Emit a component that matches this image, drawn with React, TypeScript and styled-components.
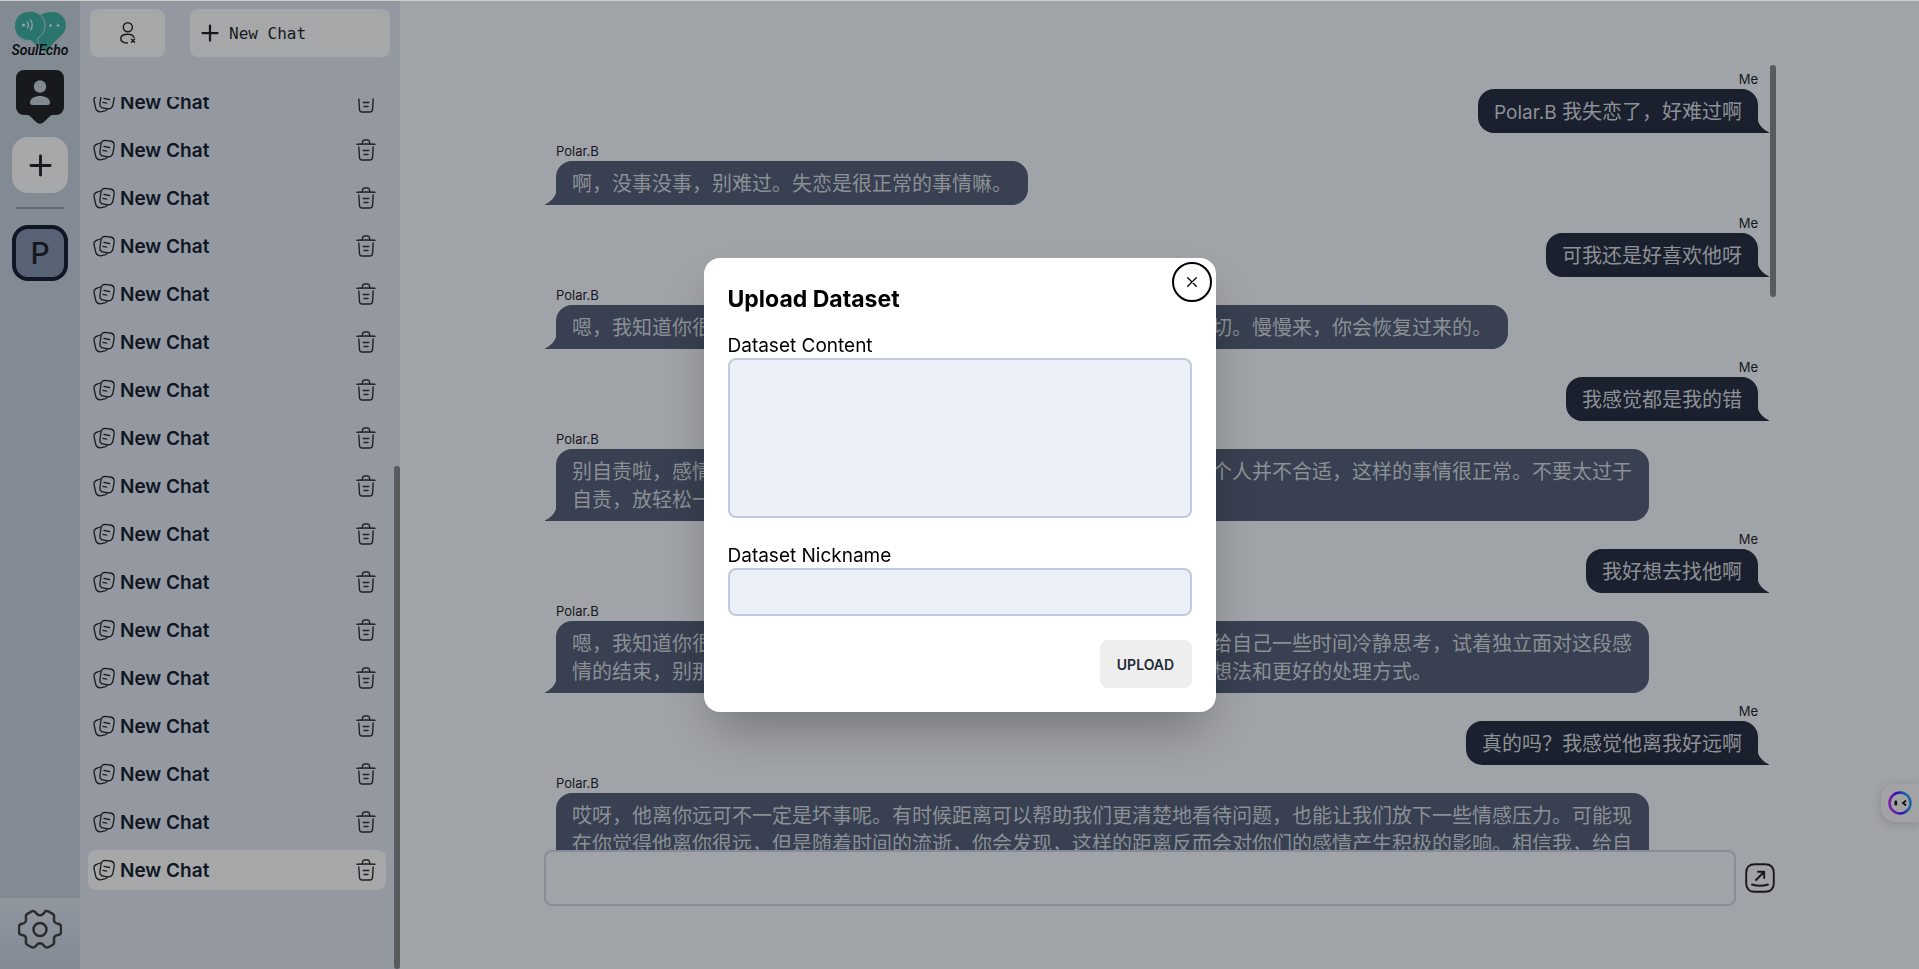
import React from "react";
import styled, { createGlobalStyle } from "styled-components";

const sans = `Inter, "Noto Sans CJK SC", sans-serif`;

const GlobalStyle = createGlobalStyle`
  *, *::before, *::after { box-sizing: border-box; }
  html, body, #root { height: 100%; }
  body { margin: 0; overflow: hidden; font-family: ${sans}; background: #a0a3a7; }
  button, input, textarea { font: inherit; color: inherit; }
  button { border: 0; padding: 0; cursor: pointer; display: flex; align-items: center; justify-content: center; }
`;

const Page = styled.div`
  display: flex;
  height: 100%;
  border-top: 1px solid #cdced0;
`;

/* ---- left rail ---- */
const Rail = styled.nav`
  width: 80px;
  flex: none;
  display: flex;
  flex-direction: column;
  align-items: center;
  background: #828a94;
`;
const LogoLink = styled.a`
  display: block;
  height: 48px;
  margin-top: 8px;
`;
const BadgeButton = styled.button`
  width: 48px;
  height: 54px;
  margin-top: 13px;
  background: none;
`;
const AddButton = styled.button`
  width: 56px;
  height: 56px;
  margin-top: 13px;
  border-radius: 16px;
  background: #a7a8a9;
  color: #17191d;
`;
const Divider = styled.hr`
  width: 48px;
  height: 2px;
  margin: 14px 0 16px;
  border: 0;
  border-radius: 2px;
  background: #646a75;
`;
const AvatarButton = styled.button`
  width: 56px;
  height: 56px;
  border: 4px solid #101623;
  border-radius: 16px;
  background: #586476;
  color: #14181f;
  font-size: 30px;
  font-weight: 500;
`;
const SettingsBar = styled.div`
  display: flex;
  justify-content: center;
  width: 100%;
  height: 71px;
  margin-top: auto;
  padding-top: 10px;
  background: linear-gradient(#9297a0, #828a94);
`;
const SettingsButton = styled.button`
  width: 44px;
  height: 44px;
  background: none;
`;

/* ---- chat list ---- */
const Sidebar = styled.aside`
  width: 320px;
  flex: none;
  display: flex;
  flex-direction: column;
  background: #9398a1;
`;
const Toolbar = styled.div`
  display: flex;
  justify-content: space-between;
  padding: 8px 10px 40px;
`;
const ToolButton = styled.button<{ $wide?: boolean }>`
  width: ${(p) => (p.$wide ? 200 : 75)}px;
  height: 48px;
  gap: 10px;
  border-radius: 8px;
  background: #a6a7a8;
  color: #14181f;
  font-family: "DejaVu Sans Mono", monospace;
  font-size: 16px;
  ${(p) => p.$wide && "justify-content: flex-start; padding-left: 11px;"}
`;
const ListArea = styled.div`
  flex: 1;
  min-height: 0;
  display: flex;
  overflow: hidden;
`;
const ChatList = styled.ul`
  flex: 1;
  display: flex;
  flex-direction: column;
  justify-content: flex-end;
  gap: 8px;
  margin: 0;
  padding: 0 8px 79px;
  list-style: none;
`;
const ChatRow = styled.li<{ $active?: boolean }>`
  flex: none;
  display: flex;
  align-items: center;
  justify-content: space-between;
  height: 40px;
  padding: 0 10px 0 4px;
  border-radius: 8px;
  background: ${(p) => (p.$active ? "#a6a7a8" : "transparent")};
`;
const ChatLink = styled.a`
  display: flex;
  align-items: center;
  gap: 4px;
  color: #101623;
  font-size: 19px;
  font-weight: 600;
  line-height: 28px;
  text-decoration: none;
`;
const ChatTitle = styled.span`
  padding-top: 2px;
`;
const IconButton = styled.button`
  background: none;
`;
const ListTrack = styled.div`
  width: 6px;
  display: flex;
  flex-direction: column;
  justify-content: flex-end;
`;
const Thumb = styled.div<{ $size: string }>`
  width: 6px;
  height: ${(p) => p.$size};
  border-radius: 3px;
  background: #585b5e;
`;

/* ---- conversation ---- */
const Main = styled.main`
  flex: 1;
  min-width: 0;
  display: flex;
  flex-direction: column;
  padding: 64px 143px 63px 144px;
  background: #a0a3a7;
`;
const Conversation = styled.section`
  flex: 1;
  min-height: 0;
  display: flex;
  overflow: hidden;
`;
const Messages = styled.div`
  flex: 1;
  padding-left: 12px;
`;
const Message = styled.article<{ $mine: boolean }>`
  display: flex;
  flex-direction: column;
  align-items: ${(p) => (p.$mine ? "flex-end" : "flex-start")};
  padding: 4px 0;
`;
const Author = styled.header<{ $mine: boolean }>`
  margin-right: ${(p) => (p.$mine ? 12 : 0)}px;
  color: #14171c;
  font-size: 13px;
  line-height: 20px;
`;
const Bubble = styled.div<{ $mine: boolean }>`
  position: relative;
  max-width: 90%;
  padding: 9px 16px 7px;
  margin-right: ${(p) => (p.$mine ? 12 : 0)}px;
  border-radius: ${(p) => (p.$mine ? "16px 16px 0 16px" : "16px 16px 16px 0")};
  background: ${(p) => (p.$mine ? "#1a202e" : "#384051")};
  color: ${(p) => (p.$mine ? "#8e9196" : "#8b9096")};
  font-size: 20px;
  line-height: 28px;
  line-break: anywhere;
  text-spacing-trim: space-all;
`;
const Mention = styled.span`
  font-size: 19px;
  line-height: 20px;
`;
const Tail = styled.svg<{ $mine: boolean }>`
  position: absolute;
  bottom: 0;
  ${(p) => (p.$mine ? "left: 100%;" : "right: 100%; transform: scaleX(-1);")}
  fill: ${(p) => (p.$mine ? "#1a202e" : "#384051")};
`;
const Composer = styled.form`
  display: flex;
  align-items: center;
  gap: 9px;
  padding-right: 1px;
`;
const MessageInput = styled.input`
  flex: 1;
  min-width: 0;
  height: 56px;
  padding: 0 16px;
  border: 2px solid #868d98;
  border-radius: 8px;
  background: transparent;
  font-size: 20px;
`;
const Assistant = styled.button`
  position: fixed;
  right: 0;
  top: 784px;
  width: 38px;
  height: 38px;
  border-radius: 14px 0 0 14px;
  background: #a3a3a5;
  box-shadow: 0 2px 10px rgba(0, 0, 0, 0.16);
`;

/* ---- upload dialog ---- */
const Overlay = styled.div`
  position: fixed;
  inset: 1px 0 0;
  display: flex;
  align-items: center;
  justify-content: center;
`;
const Dialog = styled.form`
  position: relative;
  display: flex;
  flex-direction: column;
  width: 512px;
  padding: 24px;
  border-radius: 16px;
  background: #fff;
  color: #000;
  box-shadow: 0 25px 50px -12px rgba(0, 0, 0, 0.3);
`;
const CloseButton = styled.button`
  position: absolute;
  top: 8px;
  right: 8px;
  width: 32px;
  height: 32px;
  border-radius: 50%;
  background: none;
  outline: 2px solid #000;
  outline-offset: 2px;
`;
const Title = styled.h2`
  margin: 0;
  padding: 1px 0 15px;
  font-size: 23px;
  font-weight: 700;
  line-height: 32px;
`;
const Label = styled.label`
  padding-top: 4px;
  font-size: 19px;
  line-height: 24px;
`;
const ContentField = styled.textarea`
  height: 160px;
  margin-bottom: 22px;
  padding: 8px 16px;
  border: 2px solid #bdcbda;
  border-radius: 8px;
  background: #ebf0f9;
  resize: none;
`;
const NameField = styled.input`
  height: 48px;
  margin-bottom: 24px;
  padding: 0 16px;
  border: 2px solid #bdcbda;
  border-radius: 8px;
  background: #ebf0f9;
`;
const UploadButton = styled.button`
  align-self: flex-end;
  min-width: 92px;
  height: 48px;
  padding: 0 16px;
  border-radius: 8px;
  background: #eee;
  color: #1f2937;
  font-size: 14px;
  font-weight: 600;
`;

/* ---- drawings ---- */
const LogoSvg = styled.svg`
  display: block;
  overflow: visible;
`;
const Logo = () => (
  <LogoSvg width="60" height="48" viewBox="0 0 60 48" role="img" aria-label="SoulEcho">
    <path d="M42.5 3a13.500 13.500 0 0 1 13.500 13.500c0 7-6 11-10 15-4 4-7 8-10 12-4-4-9-8-10-12-1-5 5-6 5.500-14 0-5-1-8-2.500-10.500C32 4.500 37 3 42.500 3z" fill="#2a756c" />
    <path d="M17 2.500A14.500 14.500 0 1 0 21 31.500L31 42c-2-6-4-10-3-13A14.500 14.500 0 0 0 17 2.500z" fill="#2a756c" stroke="#828a94" strokeWidth="1" />
    <g fill="none" stroke="#9aa9ae" strokeWidth="1.200" strokeLinecap="round">
      <path d="M17.500 13q2 3 0 6M20.500 11q3.500 5 0 10" />
    </g>
    <g fill="#9aa9ae">
      <circle cx="13.500" cy="16" r="1.500" />
      <circle cx="40.500" cy="16.500" r="1.300" />
      <circle cx="48" cy="16.500" r="1.300" />
    </g>
    <text x="30" y="46" textAnchor="middle" fontFamily="Roboto, sans-serif" fontStyle="italic" fontWeight="500" fontSize="14" fill="#07090b">SoulEcho</text>
  </LogoSvg>
);

const BadgeIcon = () => (
  <svg width="48" height="54" viewBox="0 0 48 54">
    <path d="M8 0h32a8 8 0 0 1 8 8v29a8 8 0 0 1-8 8h-3c-2 0-3 1-5 3l-4 4q-4 3.500-8 0l-4-4c-2-2-3-3-5-3H8a8 8 0 0 1-8-8V8a8 8 0 0 1 8-8z" fill="#17191d" />
    <circle cx="24" cy="16.500" r="6.200" fill="#828a94" />
    <path d="M14 33c0-5 5-7 10-7s10 2 10 7q0 2-2 2H16q-2 0-2-2z" fill="#828a94" />
  </svg>
);

const PlusIcon = ({ size, stroke }: { size: number; stroke: number }) => (
  <svg width={size} height={size} viewBox="0 0 24 24" fill="none" stroke="currentColor" strokeWidth={stroke} strokeLinecap="round">
    <path d="M12 2v20M2 12h20" />
  </svg>
);

const UserXIcon = () => (
  <svg width="16" height="22" viewBox="0 0 16 22" fill="none" stroke="#1b1d20" strokeWidth="1.500" strokeLinecap="round">
    <circle cx="7.800" cy="5.300" r="4.500" />
    <path d="M14 15.500c-.6-2.300-3-3.300-6.200-3.300-4 0-7 1.400-7 4.300s2.500 4.300 6.500 4.500" />
    <path d="M11.500 17.300l3 3M14.500 17.300l-3 3" />
  </svg>
);

const CardsIcon = () => (
  <svg width="24" height="24" viewBox="0 0 24 24" fill="none" stroke="#1b1d20" strokeWidth="1.300" strokeLinecap="round" strokeLinejoin="round">
    <path d="M12.800 2.300l5.400.7q4.200.6 4 4.400l-1.100 7q-.8 4.400-5 4.400l-4.600-.7q-3.900-.6-3.600-4.400l1-6.800q.7-4.500 3.900-4.600z" />
    <path d="M8.200 5L4.500 6.300Q1.600 7.500 2 10.500l1.500 7q.9 4.300 4.800 4.300l4.500-1q1.600-.4 2.500-1.700" />
    <path d="M12 8.300l5.400 1.200M11 12.300l3.600.9" />
  </svg>
);

const TrashIcon = () => (
  <svg width="20" height="22" viewBox="0 0 20 22" fill="none" stroke="#1f2124" strokeWidth="1.400" strokeLinecap="round" strokeLinejoin="round">
    <path d="M1 5.200q9-.4 18 0M6.200 4.800l.4-2.200Q7 1 8.500 1h3q1.500 0 1.900 1.600l.4 2.200" />
    <path d="M2.800 8l.7 10.500Q3.700 21 6 21h8q2.300 0 2.500-2.500L17.200 8" />
    <path d="M7.200 11.500h5.600M8 15.500h4" />
  </svg>
);

const GearIcon = () => (
  <svg width="44" height="44" viewBox="0 0 44 44" fill="none" stroke="#2b2c2d" strokeWidth="2.500" strokeLinejoin="round">
    <path d="M27.500 2.600Q29 2.200 30.500 3l4.300 2.500q1.600 1 1.300 3-.4 3 .3 5 1 1.800 3.600 2 2.800.2 3 2.500v6.500q-.2 2.300-3 2.500-2.600.2-3.600 2-.7 2-.3 5 .3 2-1.300 3l-4.300 2.500q-2.200 1-4-1-2.200-3-4.500-3t-4.500 3q-1.800 2-4 1l-4.300-2.500q-1.600-1-1.300-3 .4-3-.3-5-1-1.800-3.600-2-2.800-.2-3-2.500V18q.2-2.300 3-2.500 2.600-.2 3.600-2 .7-2 .3-5-.3-2 1.300-3L13.500 3q2.200-1 4 1 2.200 3 4.500 3t4.500-3q.5-.8 1-1.400z" transform="translate(0 .5) scale(1 .98)" />
    <circle cx="22" cy="21.500" r="6.500" />
  </svg>
);

const SendIcon = () => (
  <svg width="30" height="30" viewBox="0 0 30 30" fill="none" stroke="#17191d" strokeWidth="1.900" strokeLinecap="round" strokeLinejoin="round">
    <path d="M10 1.200h10q8.800 0 8.800 8.800v10q0 8.800-8.800 8.800H10q-8.800 0-8.800-8.800V10q0-8.800 8.800-8.800z" />
    <path d="M11 17l8-8M13 8.800h6.200V15M7 21.500q8 2.600 16 0" />
  </svg>
);

const AssistantIcon = () => (
  <svg width="26" height="26" viewBox="0 0 26 26">
    <defs>
      <linearGradient id="ring" x1="0.100" y1="0.700" x2="0.900" y2="0.500">
        <stop offset="0" stopColor="#7a1fa8" />
        <stop offset="0.500" stopColor="#2a12b5" />
        <stop offset="1" stopColor="#1c6aa0" />
      </linearGradient>
    </defs>
    <circle cx="13" cy="13" r="10.500" fill="none" stroke="url(#ring)" strokeWidth="2.600" />
    <rect x="7.500" y="10.500" width="2.600" height="5" rx="1.300" fill="#111" />
    <path d="M18.500 11l-2.500 2 2.500 2" fill="none" stroke="#111" strokeWidth="1.800" strokeLinecap="round" />
  </svg>
);

const messages: { mine: boolean; mention?: string; text: string }[] = [
  { mine: true, mention: "Polar.B ", text: "我失恋了，好难过啊" },
  { mine: false, text: "啊，没事没事，别难过。失恋是很正常的事情嘛。" },
  { mine: true, text: "可我还是好喜欢他呀" },
  { mine: false, text: "嗯，我知道你很难过，但是也不要太伤心了，时间会慢慢治愈你心里的一切。慢慢来，你会恢复过来的。" },
  { mine: true, text: "我感觉都是我的错" },
  { mine: false, text: "别自责啦，感情的事情本来就没有绝对的对错，可能就只是你们之间的两个人并不合适，这样的事情很正常。不要太过于自责，放轻松一点，好好照顾自己。" },
  { mine: true, text: "我好想去找他啊" },
  { mine: false, text: "嗯，我知道你很想他，但是现在去找他可能会让你更难过。不如你先试着给自己一些时间冷静思考，试着独立面对这段感情的结束，别那么着急，慢慢地整理自己的心情，你也许就会有一些新的想法和更好的处理方式。" },
  { mine: true, text: "真的吗？我感觉他离我好远啊" },
  { mine: false, text: "哎呀，他离你远可不一定是坏事呢。有时候距离可以帮助我们更清楚地看待问题，也能让我们放下一些情感压力。可能现在你觉得他离你很远，但是随着时间的流逝，你会发现，这样的距离反而会对你们的感情产生积极的影响。相信我，给自己一些时间。" },
];

const chats = Array.from({ length: 17 }, (_, i) => ({ id: i, title: "New Chat" }));

export default function App() {
  return (
    <>
      <GlobalStyle />
      <Page>
        <Rail>
          <LogoLink href="#home"><Logo /></LogoLink>
          <BadgeButton aria-label="Profile"><BadgeIcon /></BadgeButton>
          <AddButton aria-label="Add dataset"><PlusIcon size={23} stroke={3} /></AddButton>
          <Divider />
          <AvatarButton>P</AvatarButton>
          <SettingsBar>
            <SettingsButton aria-label="Settings"><GearIcon /></SettingsButton>
          </SettingsBar>
        </Rail>

        <Sidebar>
          <Toolbar>
            <ToolButton aria-label="Remove user"><UserXIcon /></ToolButton>
            <ToolButton $wide><PlusIcon size={18} stroke={3} />New Chat</ToolButton>
          </Toolbar>
          <ListArea>
            <ChatList>
              {chats.map((chat) => (
                <ChatRow key={chat.id} $active={chat.id === chats.length - 1}>
                  <ChatLink href={`#chat-${chat.id}`}><CardsIcon /><ChatTitle>{chat.title}</ChatTitle></ChatLink>
                  <IconButton aria-label="Delete chat"><TrashIcon /></IconButton>
                </ChatRow>
              ))}
            </ChatList>
            <ListTrack><Thumb $size="503px" /></ListTrack>
          </ListArea>
        </Sidebar>

        <Main>
          <Conversation>
            <Messages>
              {messages.map(({ mine, mention, text }, i) => (
                <Message key={i} $mine={mine}>
                  <Author $mine={mine}>{mine ? "Me" : "Polar.B"}</Author>
                  <Bubble $mine={mine}>
                    {mention && <Mention>{mention}</Mention>}
                    {text}
                    <Tail $mine={mine} width="12" height="12" viewBox="0 0 12 12">
                      <path d="M-1 0H0q2 7 11 11.500v.5H-1z" />
                    </Tail>
                  </Bubble>
                </Message>
              ))}
            </Messages>
            <Thumb $size="232px" />
          </Conversation>
          <Composer>
            <MessageInput aria-label="Message" />
            <IconButton type="button" aria-label="Send"><SendIcon /></IconButton>
          </Composer>
        </Main>
      </Page>

      <Assistant aria-label="Assistant"><AssistantIcon /></Assistant>

      <Overlay>
        <Dialog role="dialog" aria-modal="true" aria-labelledby="upload-title">
          <CloseButton type="button" aria-label="Close">
            <svg width="10" height="10" viewBox="0 0 10 10" stroke="#000" strokeWidth="1.300" strokeLinecap="round">
              <path d="M.7.700l8.600 8.600M9.300.700L.7 9.300" />
            </svg>
          </CloseButton>
          <Title id="upload-title">Upload Dataset</Title>
          <Label htmlFor="dataset-content">Dataset Content</Label>
          <ContentField id="dataset-content" />
          <Label htmlFor="dataset-nickname">Dataset Nickname</Label>
          <NameField id="dataset-nickname" type="text" />
          <UploadButton type="button">UPLOAD</UploadButton>
        </Dialog>
      </Overlay>
    </>
  );
}
